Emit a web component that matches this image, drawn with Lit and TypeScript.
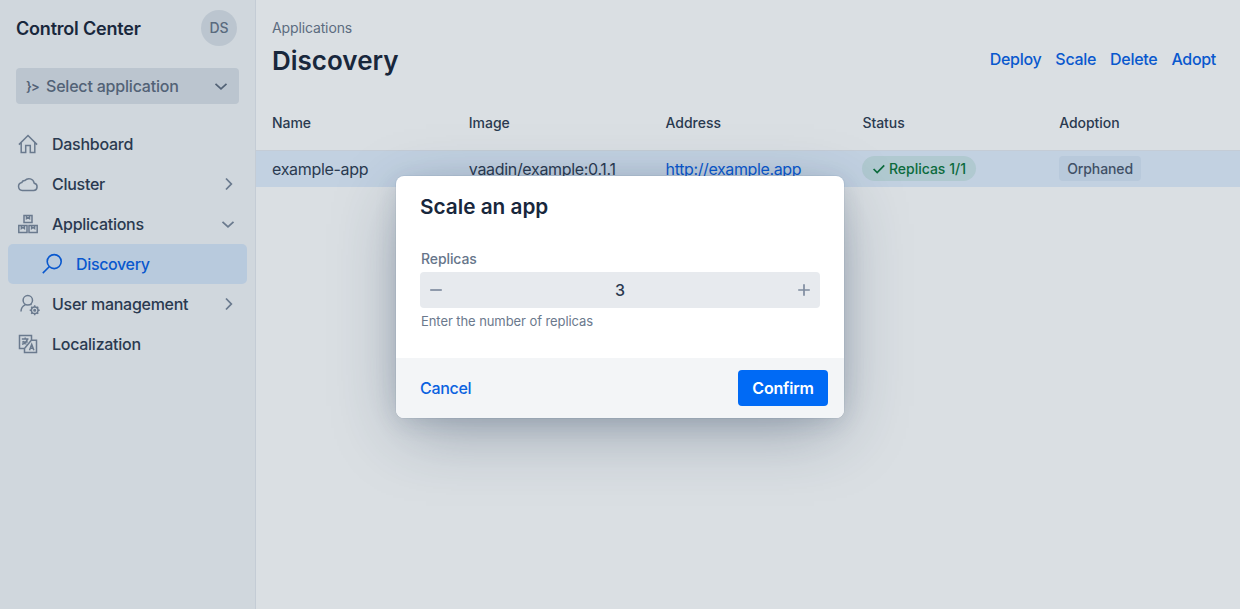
import { LitElement, html, css, svg } from "lit";
import { customElement, property } from "lit/decorators.js";

const icons: Record<string, unknown> = {
  home: svg`<path d="M.9 10.600 10 1.500l9.100 9.100M3.200 8.800v9.700h4.500v-7h4.600v7h4.500V8.800"/>`,
  cloud: svg`<path d="M4.300 16.500a4 4 0 0 1-.6-7.900 3.300 3.300 0 0 1 3.200-2 5.300 5.300 0 0 1 9.300 2.600 3.700 3.700 0 0 1-.6 7.300Z"/>`,
  boxes: svg`<path d="M6 1.600h8v6.900H6ZM.8 11.500h8.200v7H.8ZM11 11.500h8.200v7H11Z"/><path d="M8.500 1.600v3l1.500-1 1.500 1v-3M3.400 11.500v3l1.500-1 1.500 1v-3M13.600 11.500v3l1.500-1 1.500 1v-3"/>`,
  search: svg`<circle cx="12.200" cy="7.600" r="7"/><path d="M7.200 12.700.8 19.100"/>`,
  user: svg`<circle cx="9.800" cy="6.300" r="4.700"/><path d="M3 17.600c0-3.300 1.500-5.500 4.200-6.700M12.500 10.300l1 .7"/><circle cx="16.700" cy="16.300" r="3.300"/><circle cx="16.700" cy="16.300" r=".8"/><path d="M16.700 11.300V13M16.700 19.600v1.700M11.700 16.300h1.700M20 16.300h1.700M13.200 12.800l1.200 1.200M19 18.600l1.200 1.200M20.200 12.800 19 14M14.400 18.600l-1.200 1.200"/>`,
  locale: svg`<path d="M6.500 14.500h-5v-13h12v4.700M13 6.200h5.500v12.300h-12v-4M13.300 6.200 6.500 14.500M3.800 5h6.700M7.200 3.500V5M9.400 5.200c-.8 2.600-2.700 4.300-5.400 5.100M5 7.200c1 1.500 2 2.400 3.500 2.900M4.200 8h5.500M11.500 16.200l2.200-5.800 2.200 5.800M12.200 14.300h3"/>`,
  right: svg`<path d="m8 4.500 5.300 5.500L8 15.500"/>`,
  down: svg`<path d="m4.500 7.800 5.500 5 5.500-5"/>`,
  check: svg`<path d="m4 10 4 4 7.800-8"/>`,
  minus: svg`<path d="M4.200 10h11.600"/>`,
  plus: svg`<path d="M4.200 10h11.600M10 4.200v11.600"/>`,
};

@customElement("cc-icon")
class CcIcon extends LitElement {
  @property() name = "";
  static styles = css`
    :host { display: block; width: 20px; height: 20px; flex: none; }
    svg { display: block; width: 100%; height: 100%; overflow: visible; fill: none; stroke: currentColor; stroke-width: var(--stroke, 1.500); }
  `;
  render() {
    return html`<svg viewBox="0 0 20 20">${icons[this.name]}</svg>`;
  }
}

interface NavItem { label: string; icon: string; arrow?: string; child?: boolean }

const nav: NavItem[] = [
  { label: "Dashboard", icon: "home" },
  { label: "Cluster", icon: "cloud", arrow: "right" },
  { label: "Applications", icon: "boxes", arrow: "down" },
  { label: "Discovery", icon: "search", child: true },
  { label: "User management", icon: "user", arrow: "right" },
  { label: "Localization", icon: "locale" },
];

@customElement("app-root")
class AppRoot extends LitElement {
  static styles = css`
    :host { display: block; position: relative; width: 100%; height: 100vh; overflow: hidden; font: 400 16px/26px Inter, sans-serif; color: #2a3a50; background: #dadfe3; }
    * { box-sizing: border-box; }
    h1, h2 { margin: 0; font-weight: 600; color: #18273c; }
    button { font: inherit; font-weight: 500; letter-spacing: -.3px; border: 0; margin: 0; padding: 0; background: none; color: #0958ce; }
    .layout { display: grid; grid-template-columns: 256px 1fr; height: 100%; }
    .side { background: #d0d7dd; border-right: 1px solid #c4ccd5; }
    .brand { display: flex; align-items: center; justify-content: space-between; height: 56px; padding: 0 18px 0 16px; }
    .brand h2 { font-size: 18px; letter-spacing: -.2px; padding-top: 2px; }
    .avatar { width: 36px; height: 36px; border-radius: 50%; background: #bbc5cf; color: #596a7e; font: 500 14px/36px Inter, sans-serif; text-align: center; }
    .select { display: flex; align-items: center; margin: 12px 16px 0; height: 36px; padding: 0 8px 0 10px; border-radius: 4px; background: #bbc5cf; color: #526276; font-weight: 500; letter-spacing: -.2px; }
    .select span { flex: 1; margin-left: 8px; }
    .select .mark { flex: none; margin: 0; width: 12px; font: 600 13px/20px Inter, sans-serif; letter-spacing: -1px; }
    .select cc-icon { --stroke: 1.700; }
    .nav { display: flex; flex-direction: column; margin: 20px 8px 0; }
    .item { display: flex; align-items: center; height: 40px; padding: 0 8px 0 10px; font-weight: 500; letter-spacing: -.27px; border-radius: 5px; }
    .item span { flex: 1; margin-left: 14px; }
    .item cc-icon { color: #6a7a8e; }
    .item .arrow { --stroke: 1.800; margin-right: 1px; }
    .item.child { padding-left: 34px; background: #b8cadd; color: #0958ce; letter-spacing: -.35px; }
    .item.child cc-icon { color: #0958ce; --stroke: 1.600; }
    .main { min-width: 0; }
    .head { display: flex; justify-content: space-between; height: 96px; padding: 16px 24px 0 16px; }
    .crumb { font-size: 14px; line-height: 24px; letter-spacing: -.13px; color: #5c6c80; }
    .head h1 { font-size: 26px; line-height: 42px; }
    .actions { display: flex; gap: 14px; padding-top: 30px; }
    .row { display: grid; grid-template-columns: repeat(5, 1fr); align-items: center; }
    .row > div { padding-left: 16px; min-width: 0; }
    .titles { height: 54px; font-size: 14px; font-weight: 500; letter-spacing: -.04px; }
    .record { height: 37px; border-top: 1px solid #c4ccd6; background: #c2d1e1; letter-spacing: -.32px; }
    .link { color: #0958ce; text-decoration: underline; letter-spacing: -.38px; }
    .badge { display: flex; width: fit-content; align-items: center; height: 25px; padding: 0 8px; margin-bottom: 1px; font-size: 14px; font-weight: 500; letter-spacing: -.1px; border-radius: 4px; background: #b8c9db; color: #405066; }
    .badge.ok { border-radius: 13px; padding: 0 10px 0 8px; letter-spacing: 0; background: #b0c9d0; color: #0c6b3d; }
    .badge.ok cc-icon { width: 18px; height: 18px; margin-right: .5px; --stroke: 1.900; }
    .dialog { position: absolute; left: 396px; top: 176px; width: 448px; height: 242px; display: flex; flex-direction: column; border-radius: 8px; background: #fff; box-shadow: 0 0 0 1px hsla(214, 61%, 25%, .05), 0 4px 24px -3px hsla(214, 53%, 23%, .16), 0 18px 64px -8px hsla(214, 47%, 21%, .38); }
    .body { flex: 1; padding: 16px 24px 0; }
    .body h2 { font-size: 20.750px; line-height: 30px; }
    .label { margin: 26px 0 2px 1px; font-size: 14px; line-height: 22px; font-weight: 500; letter-spacing: -.1px; color: #66758a; }
    .field { display: flex; align-items: center; justify-content: space-between; height: 36px; padding: 0 6px; border-radius: 4px; background: #e7eaee; font-weight: 500; }
    .field cc-icon { color: #7f8c9f; --stroke: 1.700; }
    .help { margin: 3px 0 0 1px; font-size: 13px; line-height: 20px; letter-spacing: -.08px; color: #6b798d; }
    .foot { display: flex; align-items: center; justify-content: space-between; height: 60px; padding: 0 16px 0 24px; border-radius: 0 0 8px 8px; background: #f3f5f7; }
    .foot button { color: #0a62e0; }
    .foot .confirm { width: 90px; height: 36px; border-radius: 4px; background: #006af5; color: #fff; font-weight: 600; letter-spacing: -.2px; }
  `;

  render() {
    return html`
      <div class="layout">
        <aside class="side">
          <div class="brand"><h2>Control Center</h2><div class="avatar">DS</div></div>
          <div class="select"><span class="mark">}&gt;</span><span>Select application</span><cc-icon name="down"></cc-icon></div>
          <nav class="nav">
            ${nav.map((n) => html`<div class="item ${n.child ? "child" : ""}">
              <cc-icon name=${n.icon}></cc-icon><span>${n.label}</span>
              ${n.arrow ? html`<cc-icon class="arrow" name=${n.arrow}></cc-icon>` : ""}
            </div>`)}
          </nav>
        </aside>
        <main class="main">
          <header class="head">
            <div><div class="crumb">Applications</div><h1>Discovery</h1></div>
            <div class="actions">${["Deploy", "Scale", "Delete", "Adopt"].map((a) => html`<div><button>${a}</button></div>`)}</div>
          </header>
          <div class="row titles">${["Name", "Image", "Address", "Status", "Adoption"].map((t) => html`<div>${t}</div>`)}</div>
          <div class="row record">
            <div>example-app</div>
            <div>vaadin/example:0.1.1</div>
            <div><a class="link">http://example.app</a></div>
            <div><span class="badge ok"><cc-icon name="check"></cc-icon>Replicas 1/1</span></div>
            <div><span class="badge">Orphaned</span></div>
          </div>
        </main>
      </div>
      <section class="dialog">
        <div class="body">
          <h2>Scale an app</h2>
          <div class="label">Replicas</div>
          <div class="field"><cc-icon name="minus"></cc-icon><span>3</span><cc-icon name="plus"></cc-icon></div>
          <div class="help">Enter the number of replicas</div>
        </div>
        <div class="foot"><button>Cancel</button><button class="confirm">Confirm</button></div>
      </section>
    `;
  }
}
